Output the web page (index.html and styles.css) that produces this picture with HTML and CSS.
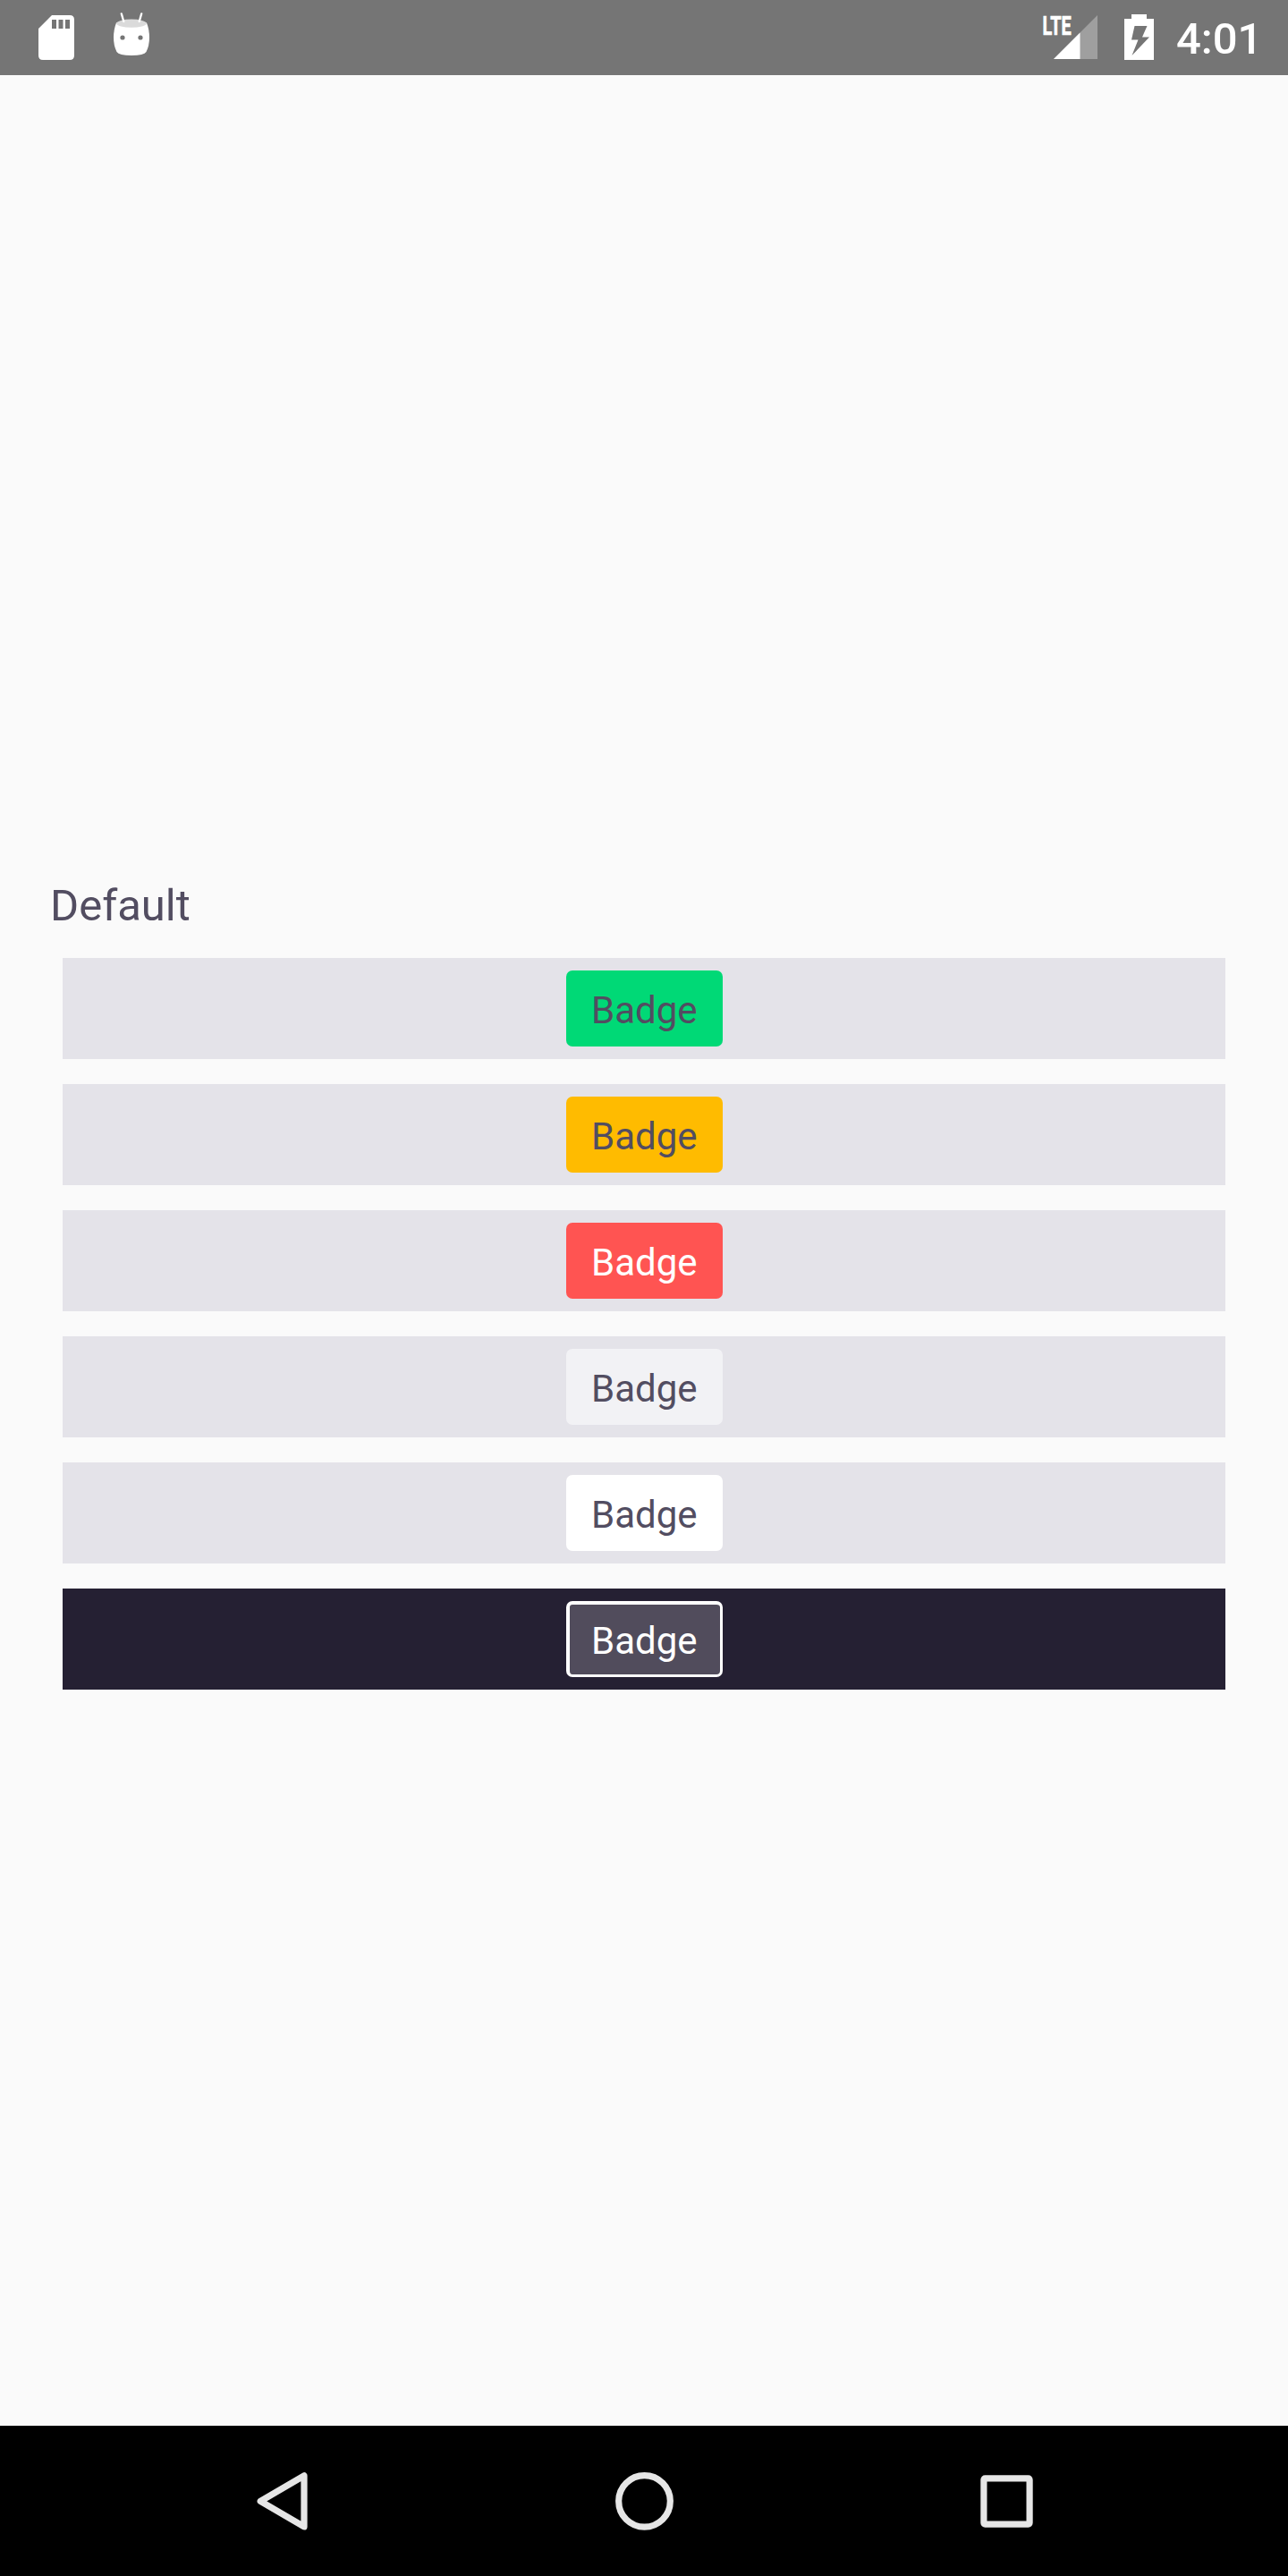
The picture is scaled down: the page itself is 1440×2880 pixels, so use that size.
FILE: index.html
```html
<!DOCTYPE html>
<html lang="en">
<head>
<meta charset="utf-8">
<title>Badge</title>
<link rel="stylesheet" href="styles.css">
</head>
<body>
<div class="screen">
  <header class="status-bar">
    <div class="notifications">
      <svg width="40" height="50" viewBox="0 0 40 50"><path fill="#fff" fill-rule="evenodd" d="M15 0H35Q40 0 40 5V45Q40 50 35 50H5Q0 50 0 45V15ZM15 5V15H20V5ZM22.5 5V15H27.5V5ZM30 5V15H35V5Z"/></svg>
      <svg class="android" width="40" height="48" viewBox="0 0 40 48">
        <path fill="#fff" d="M3 11.5Q20 4.5 37 11.5Q40 19 40 28Q40 37 36.5 44Q34 48 20 48Q6 48 3.5 44Q0 37 0 28Q0 19 3 11.5Z"/>
        <ellipse cx="20" cy="12.2" rx="16.7" ry="4.6" fill="#dadada"/>
        <path stroke="#fff" stroke-width="2.3" stroke-linecap="round" d="M8.8 1.4L11.3 10M31.2 1.4L28.7 10"/>
        <circle cx="10" cy="28" r="2.6" fill="#757575"/><circle cx="30" cy="28" r="2.6" fill="#757575"/>
      </svg>
    </div>
    <div class="system">
      <svg class="signal" width="62" height="50" viewBox="0 0 62 50">
        <path fill="#9f9f9f" d="M62 0V49H13Z"/>
        <path fill="#fff" d="M42.5 19.5V49H13Z"/>
        <text class="lte" x="0.6" y="22" textLength="32" lengthAdjust="spacingAndGlyphs">LTE</text>
      </svg>
      <svg class="battery" width="33" height="51" viewBox="0 0 33 51"><path fill="#fff" fill-rule="evenodd" d="M8 0H25V5H33V51H0V5H8ZM11.5 13L8 28.5H15.5L8.5 46L28 25.5H20L25.5 13Z"/></svg>
      <span class="clock">4:01</span>
    </div>
  </header>
  <main class="content">
    <h1 class="title">Default</h1>
    <div class="rows">
      <div class="row"><span class="badge success">Badge</span></div>
      <div class="row"><span class="badge warning">Badge</span></div>
      <div class="row"><span class="badge critical">Badge</span></div>
      <div class="row"><span class="badge subtle">Badge</span></div>
      <div class="row"><span class="badge white">Badge</span></div>
      <div class="row dark"><span class="badge outline">Badge</span></div>
    </div>
  </main>
  <nav class="nav-bar">
    <svg width="66" height="66" viewBox="0 0 66 66"><path d="M58 4.9V61.9L9.2 33.4Z"/></svg>
    <svg width="66" height="66" viewBox="0 0 66 66"><circle cx="33.5" cy="33.4" r="28.8"/></svg>
    <svg width="66" height="66" viewBox="0 0 66 66"><rect x="7.9" y="7.9" width="51.2" height="51.2" rx="1.5"/></svg>
  </nav>
</div>
</body>
</html>
```
FILE: styles.css
```css
* { box-sizing: border-box; }
body { margin: 0; font-family: Roboto, sans-serif; }
svg { display: block; flex: none; }
.screen {
  width: 1440px;
  height: 2880px;
  display: flex;
  flex-direction: column;
  background: #fafafa;
}
.status-bar {
  height: 84px;
  flex: none;
  display: flex;
  justify-content: space-between;
  padding: 0 31px 0 43px;
  background: #757575;
}
.notifications, .system { display: flex; align-items: flex-start; }
.notifications { gap: 44px; padding-top: 17px; }
.android { margin-top: -3px; }
.system { padding-top: 17px; }
.signal { overflow: visible; }
.lte { font-size: 29.5px; font-weight: 700; fill: #fff; stroke: #fff; stroke-width: 0.7; }
.battery { margin: -1px 25px 0 30px; }
.clock {
  width: 94px;
  margin-top: -1px;
  font-size: 49px;
  line-height: 56px;
  font-weight: 500;
  white-space: nowrap;
  color: #fff;
}
.content {
  flex: 1;
  padding: 900px 56px 0;
}
.title {
  margin: 0 0 29px;
  font-size: 49px;
  line-height: 58px;
  font-weight: 400;
  color: #524d61;
}
.rows { display: flex; flex-direction: column; gap: 28px; padding: 0 14px; }
.row {
  height: 113px;
  display: flex;
  align-items: center;
  justify-content: center;
  background: #e4e3e9;
}
.dark { background: #252033; }
.badge {
  width: 175px;
  height: 85px;
  margin-left: 1px;
  padding-left: 28px;
  border-radius: 7px;
  font-size: 42px;
  line-height: 89px;
  white-space: nowrap;
  color: #524d61;
}
.success { background: #00d976; }
.warning { background: #ffbb00; }
.critical { background: #ff5452; color: #fff; }
.subtle { background: #f2f2f5; }
.white { background: #fff; }
.outline {
  border: 4px solid #fff;
  border-right-width: 3px;
  border-bottom-width: 3px;
  padding-left: 24px;
  line-height: 81px;
  background: #514c5c;
  color: #fff;
}
.nav-bar {
  height: 168px;
  flex: none;
  display: flex;
  justify-content: center;
  align-items: center;
  gap: 339px;
  background: #000;
}
.nav-bar svg { fill: none; stroke: #e6e6e6; stroke-width: 7.2; stroke-linejoin: round; }
```
